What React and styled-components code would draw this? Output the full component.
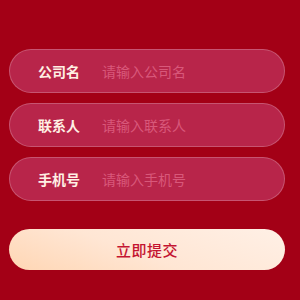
import React from "react"
import styled, { createGlobalStyle } from "styled-components"

const GlobalStyle = createGlobalStyle`
  html, body {
    margin: 0;
    padding: 0;
    background: #a30016;
    font-family: "Noto Sans CJK SC", "Noto Sans", sans-serif;
  }
`

const Page = styled.div`
  width: 300px;
  height: 300px;
  box-sizing: border-box;
  padding: 49px 15px 0 9px;
  background: #a30016;
  display: flex;
  flex-direction: column;
`

const Form = styled.form`
  display: flex;
  flex-direction: column;
  gap: 10px;
  margin: 0;
`

const Field = styled.label`
  height: 44px;
  box-sizing: border-box;
  border-radius: 22px;
  background: #b8254a;
  border: 1px solid rgba(255, 255, 255, 0.22);
  display: flex;
  align-items: center;
  padding-left: 28px;
`

const Label = styled.span`
  width: 64px;
  flex-shrink: 0;
  font-size: 14px;
  font-weight: 700;
  color: #fff0e4;
`

const Input = styled.input`
  flex: 1;
  min-width: 0;
  border: 0;
  outline: none;
  background: transparent;
  font-family: inherit;
  font-size: 14px;
  color: #fff;
  padding: 0;

  &::placeholder {
    color: #d8587a;
  }
`

const Submit = styled.button`
  margin-top: 28px;
  height: 41px;
  border: 0;
  border-radius: 21px;
  background: linear-gradient(20deg, #ffd6b4 0%, #ffe6d4 45%, #fff0e6 100%);
  color: #c41431;
  font-family: inherit;
  font-size: 15px;
  font-weight: 500;
  letter-spacing: 0.5px;
  cursor: pointer;
`

const fields = [
  { label: "公司名", placeholder: "请输入公司名" },
  { label: "联系人", placeholder: "请输入联系人" },
  { label: "手机号", placeholder: "请输入手机号" },
]

const App = () => {
  return (
    <>
      <GlobalStyle />
      <Page>
        <Form onSubmit={(e) => e.preventDefault()}>
          {fields.map((f) => (
            <Field key={f.label}>
              <Label>{f.label}</Label>
              <Input placeholder={f.placeholder} />
            </Field>
          ))}
        </Form>
        <Submit type="button">立即提交</Submit>
      </Page>
    </>
  )
}

export default App
